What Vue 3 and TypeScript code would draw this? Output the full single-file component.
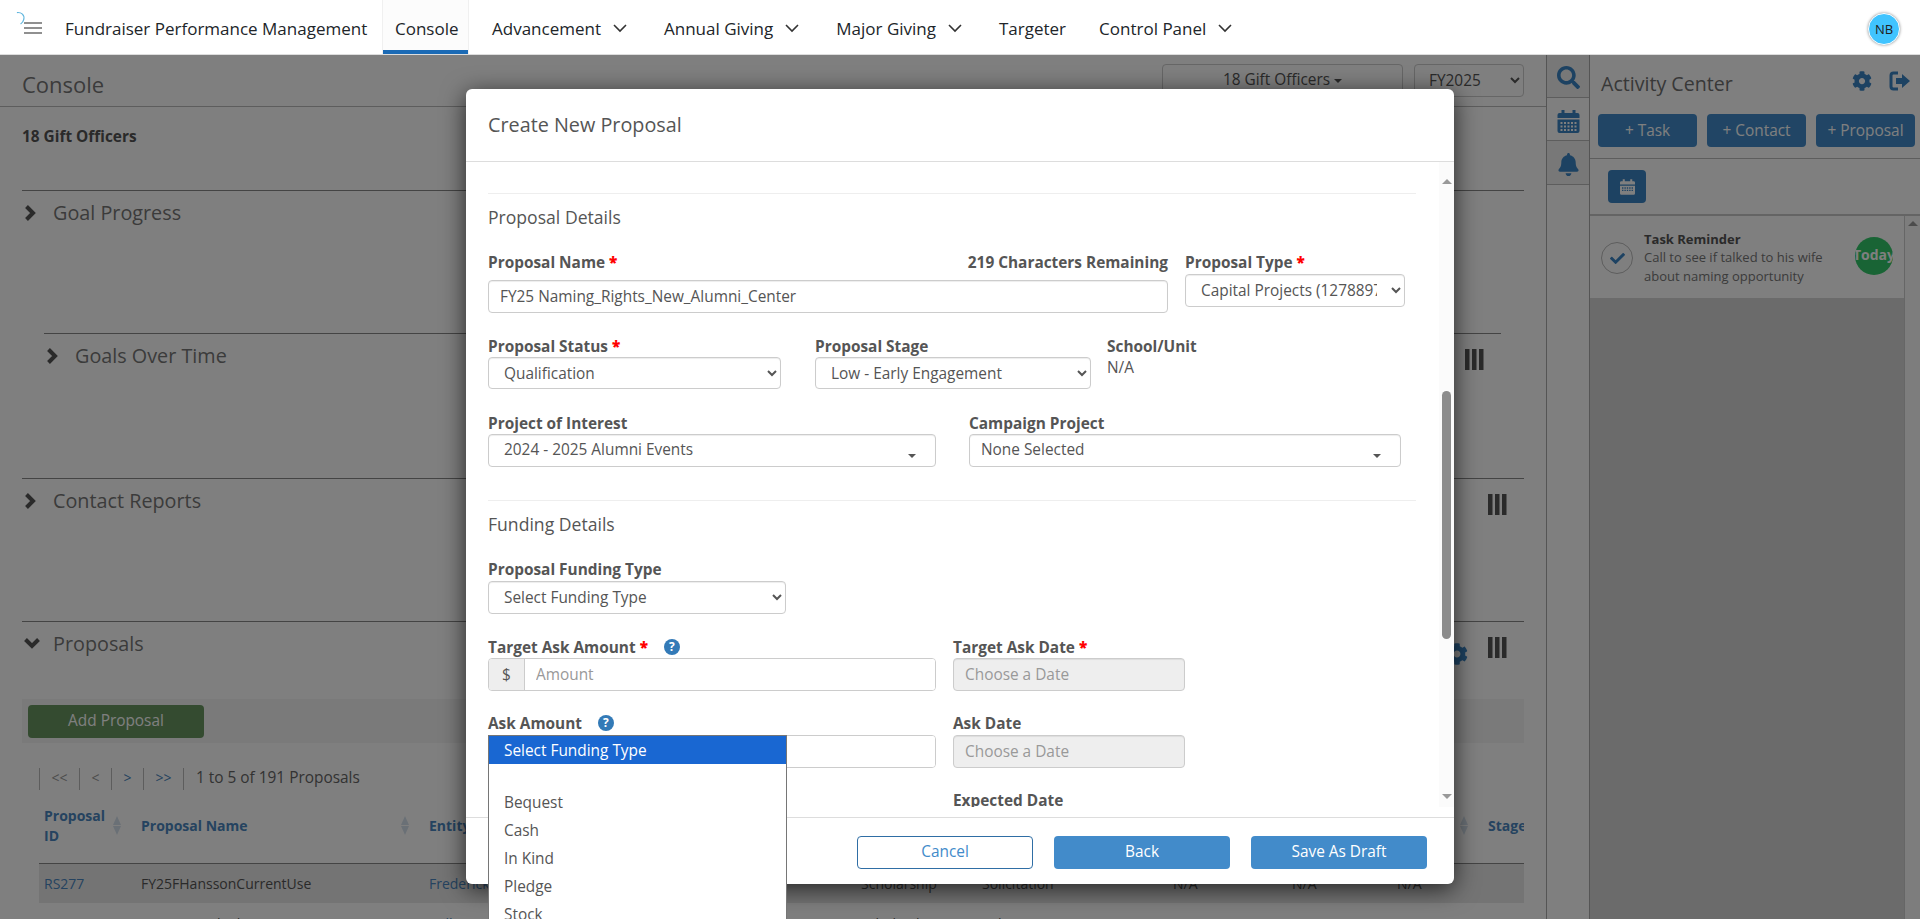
<script setup lang="ts">
const navItems = [
  { label: 'Console', active: true, caret: false },
  { label: 'Advancement', active: false, caret: true },
  { label: 'Annual Giving', active: false, caret: true },
  { label: 'Major Giving', active: false, caret: true },
  { label: 'Targeter', active: false, caret: false },
  { label: 'Control Panel', active: false, caret: true },
]
const gear =
  'M487.4 315.7l-42.6-24.6c4.3-23.2 4.3-47 0-70.2l42.6-24.6c4.9-2.8 7.1-8.6 5.5-14-11.1-35.6-30-67.8-54.7-94.6-3.8-4.1-10-5.1-14.8-2.3L380.8 110c-17.9-15.4-38.5-27.3-60.8-35.1V25.8c0-5.6-3.9-10.5-9.4-11.7-36.7-8.2-74.3-7.8-109.2 0-5.5 1.2-9.4 6.1-9.4 11.7V75c-22.2 7.9-42.8 19.8-60.8 35.1L88.7 85.5c-4.9-2.8-11-1.9-14.8 2.3-24.7 26.7-43.6 58.9-54.7 94.6-1.7 5.4.6 11.2 5.5 14L67.3 221c-4.3 23.2-4.3 47 0 70.2l-42.6 24.6c-4.9 2.8-7.1 8.6-5.5 14 11.1 35.6 30 67.8 54.7 94.6 3.8 4.1 10 5.1 14.8 2.3l42.6-24.6c17.9 15.4 38.5 27.3 60.8 35.1v49.2c0 5.6 3.9 10.5 9.4 11.7 36.7 8.2 74.3 7.8 109.2 0 5.5-1.2 9.4-6.1 9.4-11.7v-49.2c22.2-7.9 42.8-19.8 60.8-35.1l42.6 24.6c4.9 2.8 11 1.9 14.8-2.3 24.7-26.7 43.6-58.9 54.7-94.6 1.5-5.5-.7-11.3-5.6-14.1zM256 336c-44.1 0-80-35.9-80-80s35.9-80 80-80 80 35.9 80 80-35.9 80-80 80z'
const rows = [
  { id: 'RS277', name: 'FY25FHanssonCurrentUse', entity: 'Frederick Hansson', type: 'Scholarship', stage: 'Solicitation' },
  { id: 'RS276', name: 'FY23 Hausel Edu 2021B', entity: 'William Hausel', type: 'Scholarship', stage: 'Solicitation' },
]
const options = ['', 'Bequest', 'Cash', 'In Kind', 'Pledge', 'Stock']
</script>

<template>
  <div class="app">
    <header class="nav">
      <div class="brand-icon">
        <svg class="spin" viewBox="0 0 12 16"><path d="M1 1.5C6 1 9.5 4 8.5 9 8 11.5 6.500 13 5 14" /></svg>
        <svg class="burger" viewBox="0 0 18 12"><path d="M0 1h18M0 6h18M0 11h18" /></svg>
      </div>
      <span class="brand">Fundraiser Performance Management</span>
      <nav class="nav-items">
        <a v-for="item in navItems" :key="item.label" class="nav-item" :class="{ active: item.active }">
          {{ item.label }}
          <svg v-if="item.caret" class="caret" viewBox="0 0 14 9"><path d="M1 1l6 6 6-6" /></svg>
        </a>
      </nav>
      <div class="avatar">NB</div>
    </header>

    <div class="workspace">
      <main class="content">
        <div class="page-head">
          <h1>Console</h1>
          <div class="head-controls">
            <button class="officer-btn">18 Gift Officers <i class="tri"></i></button>
            <select class="fy"><option>FY2025</option></select>
          </div>
        </div>
        <div class="officers">18 Gift Officers</div>

        <section class="section s-goal">
          <div class="sec-head">
            <svg class="chev" viewBox="0 0 14 18"><path d="M3.500 2.500l6.500 6.500-6.500 6.500" /></svg>
            <h2>Goal Progress</h2>
          </div>
        </section>
        <section class="section s-time">
          <div class="sec-head">
            <svg class="chev" viewBox="0 0 14 18"><path d="M3.500 2.500l6.500 6.500-6.500 6.500" /></svg>
            <h2>Goals Over Time</h2>
            <svg class="bars" viewBox="0 0 19 21"><path d="M0 0h4.500v21H0zM7 0h4.500v21H7zM14 0h4.500v21H14z" /></svg>
          </div>
        </section>
        <section class="section s-contact">
          <div class="sec-head">
            <svg class="chev" viewBox="0 0 14 18"><path d="M3.500 2.500l6.500 6.500-6.500 6.500" /></svg>
            <h2>Contact Reports</h2>
            <svg class="bars" viewBox="0 0 19 21"><path d="M0 0h4.500v21H0zM7 0h4.500v21H7zM14 0h4.500v21H14z" /></svg>
          </div>
        </section>
        <section class="section s-prop">
          <div class="sec-head">
            <svg class="chev-down" viewBox="0 0 18 12"><path d="M2.500 2.500l6.500 6.500 6.500-6.500" /></svg>
            <h2>Proposals</h2>
            <svg class="sec-gear" viewBox="0 0 512 512"><path :d="gear" /></svg>
            <svg class="bars" viewBox="0 0 19 21"><path d="M0 0h4.500v21H0zM7 0h4.500v21H7zM14 0h4.500v21H14z" /></svg>
          </div>
          <div class="toolbar"><button class="add-btn">Add Proposal</button></div>
          <div class="pager">
            <span class="pg muted wide">&lt;&lt;</span>
            <span class="pg muted">&lt;</span>
            <span class="pg link">&gt;</span>
            <span class="pg link wide">&gt;&gt;</span>
            <span class="pg-text">1 to 5 of 191 Proposals</span>
          </div>
          <div class="table-wrap">
            <table>
              <colgroup>
                <col class="c1" /><col class="c2" /><col class="c3" /><col class="c4" />
                <col class="c5" /><col class="c6" /><col class="c7" /><col class="c8" /><col class="c9" />
              </colgroup>
              <thead>
                <tr>
                  <th><div class="th">Proposal ID<i class="sort"></i></div></th>
                  <th><div class="th">Proposal Name<i class="sort"></i></div></th>
                  <th><div class="th">Entity</div></th>
                  <th><div class="th">Type</div></th>
                  <th><div class="th">Status</div></th>
                  <th><div class="th">Target</div></th>
                  <th><div class="th">Ask</div></th>
                  <th><div class="th">Date<i class="sort"></i></div></th>
                  <th><div class="th">Stage</div></th>
                </tr>
              </thead>
              <tbody>
                <tr v-for="(r, i) in rows" :key="r.id" :class="{ shade: i === 0 }">
                  <td class="lnk">{{ r.id }}</td>
                  <td>{{ r.name }}</td>
                  <td class="lnk">{{ r.entity }}</td>
                  <td>{{ r.type }}</td>
                  <td>{{ r.stage }}</td>
                  <td>N/A</td>
                  <td>N/A</td>
                  <td>N/A</td>
                  <td></td>
                </tr>
              </tbody>
            </table>
          </div>
        </section>
      </main>

      <aside class="tabs">
        <div class="tab">
          <svg viewBox="0 0 512 512"><path d="M505 442.7L405.3 343c-4.5-4.5-10.6-7-17-7H372c27.6-35.3 44-79.7 44-128C416 93.1 322.9 0 208 0S0 93.1 0 208s93.1 208 208 208c48.3 0 92.7-16.4 128-44v16.3c0 6.4 2.5 12.5 7 17l99.7 99.7c9.4 9.4 24.6 9.4 33.9 0l28.3-28.3c9.4-9.4 9.4-24.6.1-34zM208 336c-70.7 0-128-57.2-128-128 0-70.7 57.2-128 128-128 70.7 0 128 57.2 128 128 0 70.7-57.2 128-128 128z" /></svg>
        </div>
        <div class="tab current">
          <svg viewBox="0 0 22 23">
            <path d="M0 5a2 2 0 0 1 2-2h2V0h3v3h8V0h3v3h2a2 2 0 0 1 2 2v3H0z" />
            <path fill-rule="evenodd" d="M0 9.5h22V21a2 2 0 0 1-2 2H2a2 2 0 0 1-2-2zM3 12v2h2v-2zm3.5 0v2h2v-2zm3.5 0v2h2v-2zm3.5 0v2h2v-2zm3.5 0v2h2v-2zM3 15.5v2h2v-2zm3.5 0v2h2v-2zm3.5 0v2h2v-2zm3.5 0v2h2v-2zm3.5 0v2h2v-2zM3 19v2h2v-2zm3.5 0v2h2v-2zm3.5 0v2h2v-2zm3.5 0v2h2v-2zm3.5 0v2h2v-2z" />
          </svg>
        </div>
        <div class="tab bell">
          <svg viewBox="0 0 448 512"><path d="M224 512c35.32 0 63.97-28.65 63.97-64H160.03c0 35.35 28.65 64 63.97 64zm215.39-149.71c-19.32-20.76-55.47-51.99-55.47-154.29 0-77.7-54.48-139.9-127.94-155.16V32c0-17.67-14.32-32-31.98-32s-31.98 14.33-31.98 32v20.84C118.56 68.1 64.08 130.3 64.08 208c0 102.3-36.15 133.53-55.47 154.29-6 6.45-8.66 14.16-8.61 21.71.11 16.4 12.98 32 32.1 32h383.8c19.12 0 32-15.6 32.1-32 .05-7.55-2.61-15.27-8.61-21.71z" /></svg>
        </div>
      </aside>

      <aside class="activity">
        <div class="act-head">
          <h2>Activity Center</h2>
          <svg class="act-gear" viewBox="0 0 512 512"><path :d="gear" /></svg>
          <svg class="act-out" viewBox="0 0 22 20">
            <path class="out-frame" d="M9 2H4.500A2.500 2.500 0 0 0 2 4.500v11A2.500 2.500 0 0 0 4.500 18H9" />
            <path class="out-arrow" d="M7 7h6V3l8 7-8 7v-4H7z" />
          </svg>
        </div>
        <div class="act-btns">
          <button>+ Task</button>
          <button>+ Contact</button>
          <button>+ Proposal</button>
        </div>
        <div class="act-tools">
          <button class="cal-btn">
            <svg viewBox="0 0 22 23">
              <path d="M0 5a2 2 0 0 1 2-2h2V0h3v3h8V0h3v3h2a2 2 0 0 1 2 2v3H0z" />
              <path fill-rule="evenodd" d="M0 9.5h22V21a2 2 0 0 1-2 2H2a2 2 0 0 1-2-2zM3 12v2h2v-2zm3.5 0v2h2v-2zm3.5 0v2h2v-2zm3.5 0v2h2v-2zm3.5 0v2h2v-2zM3 15.500v2h2v-2zm3.500 0v2h2v-2zm3.500 0v2h2v-2zm3.500 0v2h2v-2zm3.500 0v2h2v-2z" />
            </svg>
          </button>
        </div>
        <div class="act-list">
          <div class="card">
            <span class="check">
              <svg viewBox="0 0 512 512"><path d="M173.898 439.404l-166.4-166.4c-9.997-9.997-9.997-26.206 0-36.204l36.203-36.204c9.997-9.998 26.207-9.998 36.204 0L192 312.69 432.095 72.596c9.997-9.997 26.207-9.997 36.204 0l36.203 36.204c9.997 9.997 9.997 26.206 0 36.204l-294.4 294.401c-9.998 9.997-26.207 9.997-36.204-.001z" /></svg>
            </span>
            <div class="card-text">
              <strong>Task Reminder</strong>
              <p>Call to see if talked to his wife about naming opportunity</p>
            </div>
            <span class="today"><span>Today</span></span>
          </div>
          <div class="act-scroll"><i class="up"></i></div>
        </div>
      </aside>
    </div>

    <div class="backdrop"></div>

    <div class="modal">
      <div class="m-head">Create New Proposal</div>
      <div class="m-body">
        <div class="form">
          <hr class="rule first" />
          <h3>Proposal Details</h3>
          <div class="row r1">
            <div>
              <div class="label-row">
                <label>Proposal Name <b>*</b></label>
                <label>219 Characters Remaining</label>
              </div>
              <input class="ctl gap8" value="FY25 Naming_Rights_New_Alumni_Center" />
            </div>
            <div>
              <label>Proposal Type <b>*</b></label>
              <select class="ctl gap2"><option>Capital Projects (1278897)</option></select>
            </div>
          </div>
          <div class="row r2">
            <div>
              <label>Proposal Status <b>*</b></label>
              <select class="ctl gap1 short"><option>Qualification</option></select>
            </div>
            <div>
              <label>Proposal Stage</label>
              <select class="ctl gap1 short"><option>Low - Early Engagement</option></select>
            </div>
            <div>
              <label>School/Unit</label>
              <div class="static">N/A</div>
            </div>
          </div>
          <div class="row r3">
            <div>
              <label>Project of Interest</label>
              <div class="ctl gap1 picker">2024 - 2025 Alumni Events<i class="tri"></i></div>
            </div>
            <div>
              <label>Campaign Project</label>
              <div class="ctl gap1 picker">None Selected<i class="tri"></i></div>
            </div>
          </div>
          <hr class="rule second" />
          <h3 class="h-fund">Funding Details</h3>
          <div class="row r4">
            <div>
              <label>Proposal Funding Type</label>
              <select class="ctl gap2"><option>Select Funding Type</option></select>
            </div>
          </div>
          <div class="row r5">
            <div>
              <label>Target Ask Amount <b>*</b><span class="help">?</span></label>
              <div class="group gap1"><span class="addon">$</span><input placeholder="Amount" /></div>
            </div>
            <div>
              <label>Target Ask Date <b>*</b></label>
              <input class="ctl gap1 dis" disabled placeholder="Choose a Date" />
            </div>
          </div>
          <div class="row r6">
            <div>
              <label>Ask Amount<span class="help">?</span></label>
              <div class="group gap2"><span class="addon">$</span><input placeholder="Amount" /></div>
            </div>
            <div>
              <label>Ask Date</label>
              <input class="ctl gap2 dis" disabled placeholder="Choose a Date" />
            </div>
          </div>
          <div class="row r6">
            <div></div>
            <div><label>Expected Date</label></div>
          </div>
        </div>
        <div class="m-scroll">
          <i class="up"></i>
          <div class="thumb"></div>
          <i class="down"></i>
        </div>
      </div>
      <div class="m-foot">
        <button class="b-outline">Cancel</button>
        <button class="b-solid">Back</button>
        <button class="b-solid">Save As Draft</button>
      </div>

      <ul class="popup">
        <li class="sel">Select Funding Type</li>
        <li v-for="o in options" :key="o" :class="{ blank: !o }">{{ o }}</li>
      </ul>
    </div>
  </div>
</template>

<style>
html,
body {
  margin: 0;
  overflow: hidden;
}
</style>

<style scoped>
* {
  box-sizing: border-box;
}
.app {
  position: relative;
  width: 1920px;
  height: 919px;
  overflow: hidden;
  background: #fff;
  font-family: 'Open Sans', sans-serif;
  font-size: 15.4px;
  color: #555;
}
h1,
h2,
h3,
p,
ul {
  margin: 0;
  padding: 0;
  font-weight: 400;
}

/* nav */
.nav {
  position: relative;
  z-index: 3;
  display: flex;
  align-items: stretch;
  height: 55px;
  background: #fff;
  border-bottom: 1px solid #ddd;
}
.brand-icon {
  position: relative;
  width: 65px;
}
.spin {
  position: absolute;
  left: 16px;
  top: 11px;
  width: 11px;
  height: 15px;
  fill: none;
  stroke: #5fb5dd;
  stroke-width: 1.3;
}
.burger {
  position: absolute;
  left: 24px;
  top: 22px;
  width: 18px;
  height: 12px;
  fill: none;
  stroke: #222;
  stroke-width: 1.2;
}
.brand {
  align-self: center;
  width: 317px;
  padding-top: 2px;
  font-size: 17px;
  color: #212529;
  white-space: nowrap;
}
.nav-items {
  display: flex;
}
.nav-item {
  display: flex;
  align-items: center;
  gap: 12px;
  padding: 2px 12px 0;
  margin-right: 13px;
  font-size: 17px;
  color: #212529;
  white-space: nowrap;
}
.nav-item:nth-child(5) {
  margin-right: 9px;
}
.nav-item.active {
  width: 87px;
  margin-right: 11px;
  background: #fcfcfc;
  border-left: 1px solid #f0f0f0;
  border-right: 1px solid #f0f0f0;
  box-shadow: inset 0 -4px 0 #1b6ab5;
}
.caret {
  width: 14px;
  height: 9px;
  fill: none;
  stroke: #333;
  stroke-width: 1.6;
}
.avatar {
  position: absolute;
  left: 1868px;
  top: 13px;
  width: 32px;
  height: 32px;
  border-radius: 50%;
  background: #40c4ff;
  border: 1px solid #fff;
  box-shadow: 0 0 3px rgba(0, 0, 0, 0.45);
  display: flex;
  align-items: center;
  justify-content: center;
  font-size: 13px;
  color: #222;
}

/* workspace */
.workspace {
  display: flex;
  height: 864px;
}
.content {
  width: 1547px;
  border-right: 1px solid #aaa;
}
.page-head {
  display: flex;
  justify-content: space-between;
  height: 52px;
  border-bottom: 1px solid #bbb;
  padding: 9px 22px 0;
}
.page-head h1 {
  font-size: 22px;
  line-height: 40px;
  color: #777;
}
.head-controls {
  display: flex;
  gap: 11px;
}
.officer-btn {
  width: 241px;
  height: 33px;
  padding: 0 0 2px;
  border: 1px solid #ccc;
  border-radius: 4px;
  background: #fff;
  font: 15.4px 'Open Sans', sans-serif;
  color: #555;
}
.tri {
  display: inline-block;
  width: 0;
  height: 0;
  border-left: 4px solid transparent;
  border-right: 4px solid transparent;
  border-top: 4px solid #555;
  vertical-align: middle;
}
.fy {
  width: 110px;
  height: 33px;
  border: 1px solid #ccc;
  border-radius: 4px;
  background: #fff;
  padding: 0 10px;
  font: 15.4px 'Open Sans', sans-serif;
  color: #555;
}
.officers {
  height: 83px;
  padding: 20px 22px 0;
  font-weight: 700;
  line-height: 20px;
}
.section {
  margin: 0 22px;
  border-top: 1px solid #888;
}
.s-goal {
  height: 143px;
}
.s-time {
  height: 145px;
  margin-left: 44px;
  margin-right: 45px;
}
.s-contact {
  height: 143px;
}
.sec-head {
  display: flex;
  align-items: center;
  height: 42px;
  position: relative;
}
.sec-head h2 {
  margin-left: 31px;
  font-size: 19.8px;
  color: #777;
}
.chev,
.chev-down {
  position: absolute;
  left: 1px;
  top: 13px;
  width: 14px;
  height: 18px;
  fill: none;
  stroke: #555;
  stroke-width: 4;
}
.chev-down {
  top: 15px;
  width: 18px;
  height: 12px;
}
.bars {
  position: absolute;
  right: 17px;
  top: 15px;
  width: 19px;
  height: 21px;
  fill: #555;
}
.sec-gear {
  position: absolute;
  right: 56px;
  top: 21px;
  width: 22px;
  height: 22px;
  fill: #3a84c4;
}
.toolbar {
  height: 44px;
  margin-top: 35px;
  padding: 6px;
  background: #f5f5f5;
}
.add-btn {
  width: 176px;
  height: 33px;
  padding: 0 0 3px;
  border: 0;
  border-radius: 4px;
  background: #689660;
  color: #fff;
  font: 15.4px 'Open Sans', sans-serif;
}
.pager {
  display: flex;
  align-items: center;
  height: 22px;
  margin: 25px 0 0 17px;
}
.pg {
  width: 32px;
  height: 22px;
  line-height: 20px;
  text-align: center;
  border-left: 1px solid #bbb;
  font-size: 14px;
}
.pg.wide {
  width: 40px;
}
.pg.muted {
  color: #999;
}
.pg.link {
  color: #4a86c0;
}
.pg-text {
  border-left: 1px solid #bbb;
  height: 22px;
  line-height: 20px;
  padding-left: 12px;
  color: #666;
  white-space: nowrap;
}
.table-wrap {
  width: 1485px;
  margin: 0 0 0 17px;
  overflow: hidden;
}
table {
  table-layout: fixed;
  width: 1304px;
  border-collapse: collapse;
  font-size: 14px;
}
.c1 { width: 97px; }
.c2 { width: 288px; }
.c3 { width: 432px; }
.c4 { width: 121px; }
.c5 { width: 191px; }
.c6 { width: 119px; }
.c7 { width: 105px; }
.c8 { width: 91px; }
.c9 { width: 60px; }
th {
  height: 73px;
  padding: 0 5px;
  text-align: left;
  font-weight: 700;
  color: #4a86c0;
  line-height: 20px;
  border-bottom: 1px solid #888;
}
.th {
  position: relative;
  padding-right: 20px;
}
.sort {
  position: absolute;
  right: 9px;
  top: 50%;
  margin-top: -10px;
  width: 9px;
  height: 19px;
}
.sort::before,
.sort::after {
  content: '';
  position: absolute;
  left: 0;
  border-left: 4.500px solid transparent;
  border-right: 4.500px solid transparent;
}
.sort::before {
  top: 0;
  border-bottom: 9px solid #d5e1ec;
}
.sort::after {
  bottom: 0;
  border-top: 9px solid #d5e1ec;
}
td {
  height: 40px;
  padding: 0 5px;
  color: #555;
  white-space: nowrap;
  overflow: hidden;
}
td.lnk {
  color: #4a86c0;
}
tr.shade td {
  background: #e8e8e8;
}

/* tabs */
.tabs {
  width: 43px;
  border-right: 1px solid #aaa;
}
.tab {
  display: flex;
  align-items: center;
  justify-content: center;
  height: 43px;
  padding-top: 2px;
  background: #f0f0f0;
  border-bottom: 1px solid #bbb;
}
.tab.bell {
  height: 44px;
  padding-top: 4px;
}
.tab svg {
  width: 23px;
  height: 23px;
  fill: #3a84c4;
}
.tab.current {
  background: #fff;
  padding-top: 4px;
}

/* activity */
.activity {
  width: 330px;
  display: flex;
  flex-direction: column;
}
.act-head {
  display: flex;
  align-items: center;
  height: 59px;
  padding: 0 9px 2px 11px;
  flex: none;
}
.act-head h2 {
  flex: 1;
  font-size: 19.6px;
  color: #707070;
}
.act-gear {
  width: 20px;
  height: 20px;
  fill: #3a84c4;
  margin: -6px 17px 0 0;
}
.act-out {
  width: 22px;
  height: 20px;
  margin-top: -6px;
}
.out-frame {
  fill: none;
  stroke: #3a84c4;
  stroke-width: 3;
}
.out-arrow {
  fill: #3a84c4;
}
.act-btns {
  display: flex;
  gap: 10px;
  padding-left: 8px;
  flex: none;
}
.act-btns button {
  width: 99px;
  height: 33px;
  border: 0;
  border-radius: 4px;
  background: #428bca;
  color: #fff;
  font: 15.4px 'Open Sans', sans-serif;
  white-space: nowrap;
  padding: 0;
}
.act-tools {
  flex: none;
  height: 58px;
  margin-top: 11px;
  padding: 11px 18px;
  border-top: 1px solid #bbb;
  border-bottom: 2px solid #c8c8c8;
}
.cal-btn {
  display: flex;
  align-items: center;
  justify-content: center;
  width: 38px;
  height: 33px;
  padding: 0;
  border: 0;
  border-radius: 4px;
  background: #3a84c4;
}
.cal-btn svg {
  width: 15px;
  height: 16px;
  fill: #fff;
}
.act-list {
  flex: 1;
  display: flex;
  align-items: flex-start;
  background: #d6d6d6;
}
.card {
  display: flex;
  flex: none;
  width: 314px;
  height: 82px;
  background: #fff;
  padding: 0 0 0 11px;
}
.check {
  flex: none;
  width: 32px;
  height: 32px;
  margin-top: 26px;
  border: 1px solid #bbb;
  border-radius: 50%;
  display: flex;
  align-items: center;
  justify-content: center;
}
.check svg {
  width: 15px;
  height: 15px;
  fill: #3a84c4;
}
.card-text {
  margin: 14px 0 0 11px;
  width: 211px;
  padding-right: 6px;
  font-size: 13px;
  line-height: 19px;
  color: #777;
}
.card-text strong {
  display: block;
  font-size: 13px;
  line-height: 18px;
  color: #555;
}
.today {
  flex: none;
  display: flex;
  justify-content: center;
  width: 38px;
  height: 38px;
  margin-top: 21px;
  border-radius: 50%;
  background: #33c96a;
  color: #fff;
  font-size: 14px;
  font-weight: 700;
  line-height: 35px;
  overflow: hidden;
}
.act-scroll {
  flex: 1;
  align-self: stretch;
  background: #fbfbfb;
  border-left: 1px solid #ccc;
  position: relative;
}
.up,
.down {
  position: absolute;
  width: 0;
  height: 0;
  border-left: 5px solid transparent;
  border-right: 5px solid transparent;
}
.up {
  border-bottom: 5px solid #999;
}
.down {
  border-top: 5px solid #999;
}
.act-scroll .up {
  left: 3px;
  top: 5px;
}

.backdrop {
  position: absolute;
  inset: 55px 0 0;
  z-index: 1;
  background: rgba(0, 0, 0, 0.5);
}

/* modal */
.modal {
  position: absolute;
  left: 466px;
  top: 89px;
  z-index: 2;
  width: 988px;
  height: 795px;
  display: flex;
  flex-direction: column;
  background: #fff;
  border-radius: 6px;
  box-shadow: 0 5px 25px rgba(0, 0, 0, 0.7);
  color: #555;
}
.m-head {
  flex: none;
  height: 73px;
  padding-left: 22px;
  border-bottom: 1px solid #ddd;
  font-size: 19.8px;
  line-height: 71px;
  color: #555;
}
.m-body {
  flex: none;
  height: 645px;
  display: flex;
  overflow: hidden;
}
.form {
  width: 973px;
  padding: 0 23px 0 22px;
  overflow: hidden;
}
.rule {
  margin: 0;
  border: 0;
  border-top: 1px solid #eee;
}
.rule.first {
  margin-top: 31px;
}
.rule.second {
  margin-top: 33px;
}
h3 {
  margin-top: 11px;
  font-size: 17.6px;
  line-height: 24px;
  color: #555;
}
.row {
  display: grid;
}
label {
  display: block;
  height: 20px;
  font-size: 15.4px;
  font-weight: 700;
  line-height: 21px;
  color: #555;
  white-space: nowrap;
}
label b {
  color: #f00;
}
.label-row {
  display: flex;
  justify-content: space-between;
}
.r1 {
  margin-top: 23px;
  grid-template-columns: 680px 220px;
  column-gap: 17px;
}
.r2 {
  margin-top: 23px;
  grid-template-columns: 293px 276px 200px;
  column-gap: 34px;
}
.r2 > div:nth-child(3) {
  margin-left: -18px;
}
.r3 {
  margin-top: 24px;
  grid-template-columns: 448px 432px;
  column-gap: 33px;
}
.r4 {
  margin-top: 23px;
  grid-template-columns: 298px;
}
.r5 {
  margin-top: 23px;
  grid-template-columns: 448px 232px;
  column-gap: 17px;
}
.r6 {
  margin-top: 22px;
  grid-template-columns: 448px 232px;
  column-gap: 17px;
}
.ctl {
  display: block;
  width: 100%;
  height: 33px;
  padding: 6px 11px;
  border: 1px solid #ccc;
  border-radius: 4px;
  background: #fff;
  box-shadow: inset 0 1px 1px rgba(0, 0, 0, 0.075);
  font: 15.4px 'Open Sans', sans-serif;
  color: #555;
}
select.ctl {
  padding: 0 11px;
}
.ctl.short {
  height: 32px;
}
input::placeholder {
  color: #999;
  opacity: 1;
}
.gap1 {
  margin-top: 1px;
}
.gap2 {
  margin-top: 2px;
}
.gap8 {
  margin-top: 8px;
}
.dis {
  background: #eee;
}
.static {
  margin-top: 1px;
  line-height: 22px;
  color: #555;
}
.picker {
  position: relative;
  padding: 5px 12px 0 15px;
  line-height: 20px;
}
.r3 > div:nth-child(2) .picker {
  padding-left: 11px;
}
.picker .tri {
  position: absolute;
  right: 19px;
  top: 19px;
}
.help {
  display: inline-block;
  width: 16px;
  height: 16px;
  margin-left: 16px;
  border-radius: 50%;
  background: #337ab7;
  color: #fff;
  font-size: 12px;
  font-weight: 700;
  line-height: 16px;
  text-align: center;
  vertical-align: 2px;
}
.group {
  display: flex;
  height: 33px;
  border: 1px solid #ccc;
  border-radius: 4px;
  overflow: hidden;
}
.addon {
  width: 36px;
  background: #eee;
  border-right: 1px solid #ccc;
  text-align: center;
  line-height: 31px;
  color: #555;
}
.group input {
  flex: 1;
  min-width: 0;
  border: 0;
  padding: 0 11px;
  font: 15.4px 'Open Sans', sans-serif;
  outline: 0;
}
.m-scroll {
  position: relative;
  width: 15px;
  height: 645px;
  background: #fbfbfb;
}
.m-scroll .up {
  left: 3px;
  top: 17px;
}
.m-scroll .down {
  left: 3px;
  top: 632px;
}
.thumb {
  position: absolute;
  left: 3px;
  top: 229px;
  width: 9px;
  height: 248px;
  border-radius: 5px;
  background: #8c8c8c;
}
.m-foot {
  flex: none;
  height: 77px;
  margin-top: 10px;
  display: flex;
  gap: 21px;
  justify-content: flex-end;
  padding: 18px 27px 0 0;
  border-top: 1px solid #ddd;
}
.m-foot button {
  width: 176px;
  height: 33px;
  padding: 0 0 2px;
  border-radius: 4px;
  font: 15.4px 'Open Sans', sans-serif;
}
.b-outline {
  background: #fff;
  border: 1px solid #2f6ea5;
  color: #428bca;
}
.b-solid {
  background: #428bca;
  border: 0;
  color: #fff;
}
.popup {
  position: absolute;
  left: 22px;
  top: 646px;
  width: 299px;
  height: 200px;
  list-style: none;
  background: #fff;
  border: 1px solid #767676;
  color: #555;
}
.popup li {
  height: 28px;
  padding-left: 15px;
  line-height: 30px;
}
.popup li.sel {
  background: #1967d2;
  color: #fff;
}
.popup li.blank {
  height: 24px;
}
</style>
